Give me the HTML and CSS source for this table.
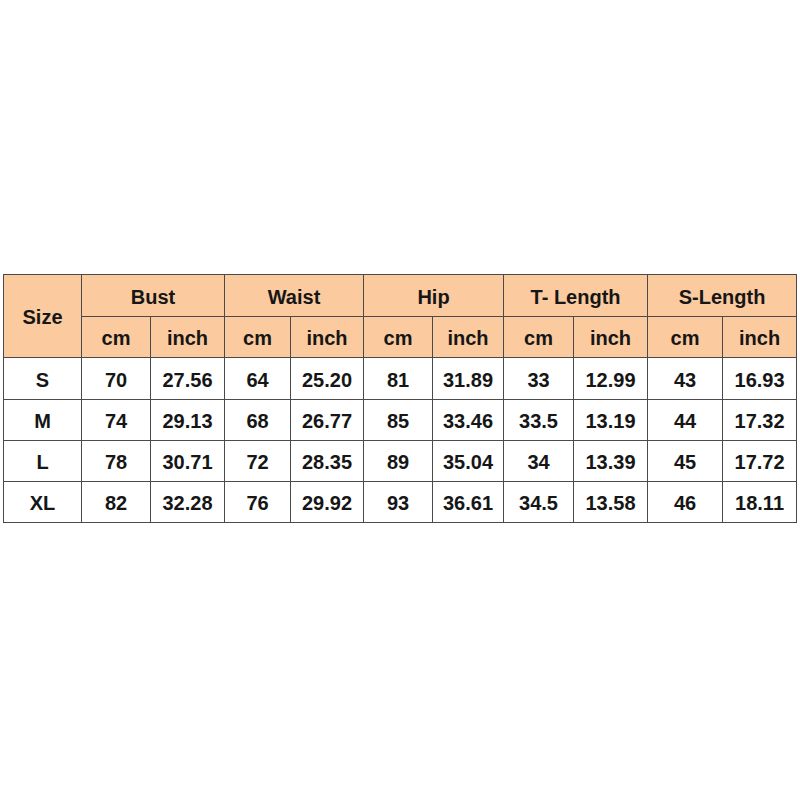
FILE: index.html
```html
<!DOCTYPE html>
<html>
<head>
<meta charset="utf-8">
<link rel="stylesheet" href="styles.css">
</head>
<body>
<div class="page">
<table class="size-table">
<colgroup>
<col class="c78"><col class="c69"><col class="c74"><col class="c66"><col class="c73"><col class="c69"><col class="c71"><col class="c70"><col class="c74"><col class="c75"><col class="c74">
</colgroup>
<thead>
<tr class="r42">
<th rowspan="2">Size</th>
<th colspan="2">Bust</th>
<th colspan="2">Waist</th>
<th colspan="2">Hip</th>
<th colspan="2">T- Length</th>
<th colspan="2">S-Length</th>
</tr>
<tr class="r41">
<th>cm</th><th>inch</th><th>cm</th><th>inch</th><th>cm</th><th>inch</th><th>cm</th><th>inch</th><th>cm</th><th>inch</th>
</tr>
</thead>
<tbody>
<tr class="r42"><td>S</td><td>70</td><td>27.56</td><td>64</td><td>25.20</td><td>81</td><td>31.89</td><td>33</td><td>12.99</td><td>43</td><td>16.93</td></tr>
<tr class="r41"><td>M</td><td>74</td><td>29.13</td><td>68</td><td>26.77</td><td>85</td><td>33.46</td><td>33.5</td><td>13.19</td><td>44</td><td>17.32</td></tr>
<tr class="r41"><td>L</td><td>78</td><td>30.71</td><td>72</td><td>28.35</td><td>89</td><td>35.04</td><td>34</td><td>13.39</td><td>45</td><td>17.72</td></tr>
<tr class="r41"><td>XL</td><td>82</td><td>32.28</td><td>76</td><td>29.92</td><td>93</td><td>36.61</td><td>34.5</td><td>13.58</td><td>46</td><td>18.11</td></tr>
</tbody>
</table>
</div>
</body>
</html>
```

FILE: styles.css
```css
html, body {
  margin: 0;
  padding: 0;
  background: #ffffff;
}
.page {
  width: 800px;
  height: 800px;
  padding: 274px 0 0 3px;
  box-sizing: border-box;
}
.size-table {
  border-collapse: collapse;
  table-layout: fixed;
  width: 794px;
  font-family: "Liberation Sans", Arial, sans-serif;
  font-weight: bold;
  font-size: 20px;
  line-height: 22px;
  color: #161616;
}
.size-table th,
.size-table td {
  border: 1px solid #4a4a4a;
  text-align: center;
  vertical-align: middle;
  padding: 2px 0 0 0;
  font-weight: bold;
}
.size-table th {
  background: #fbcb9f;
}
.c78 { width: 78px; }
.c69 { width: 69px; }
.c74 { width: 74px; }
.c66 { width: 66px; }
.c73 { width: 73px; }
.c71 { width: 71px; }
.c70 { width: 70px; }
.c75 { width: 75px; }
.r42 { height: 42px; }
.r41 { height: 41px; }
```
